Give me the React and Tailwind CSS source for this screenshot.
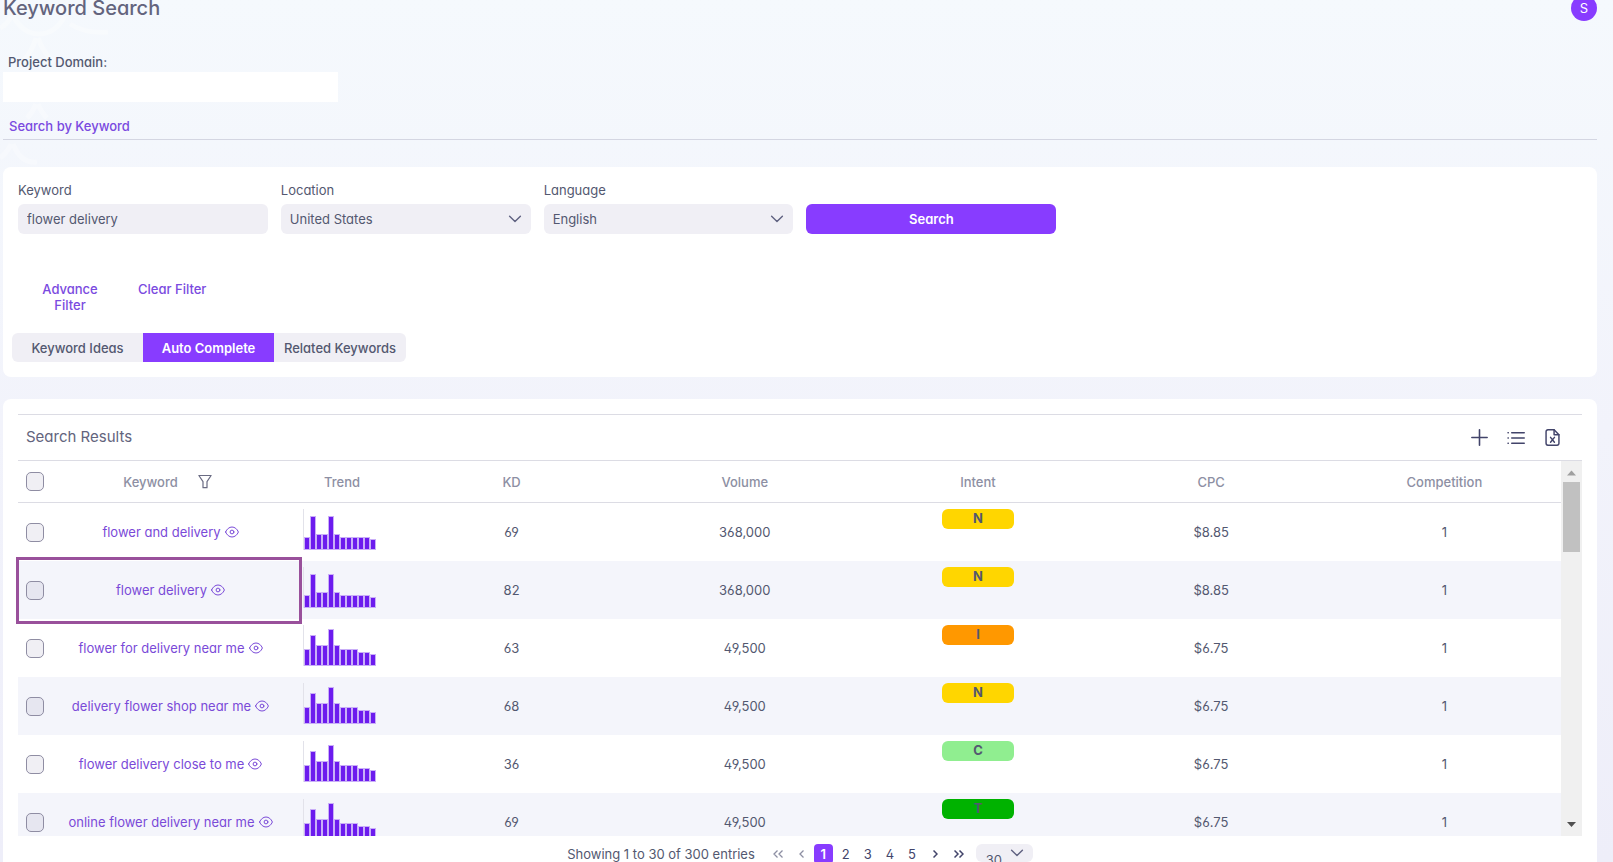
import React from "react";

const NEAR_ME = [17, 31, 21, 21, 37, 21, 17, 17, 17, 14, 14, 12];
const SEASONAL = [13, 34, 16, 16, 34, 16, 13, 13, 13, 13, 13, 11];

const INTENT_STYLES = {
  N: "bg-[#ffd600]",
  I: "bg-[#ff9800]",
  C: "bg-[#90ee90]",
  T: "bg-[#00b200]",
};

const ROWS = [
  { keyword: "flower and delivery", trend: SEASONAL, kd: 69, volume: "368,000", intent: "N", cpc: "$8.85", competition: 1 },
  { keyword: "flower delivery", trend: SEASONAL, kd: 82, volume: "368,000", intent: "N", cpc: "$8.85", competition: 1 },
  { keyword: "flower for delivery near me", trend: NEAR_ME, kd: 63, volume: "49,500", intent: "I", cpc: "$6.75", competition: 1 },
  { keyword: "delivery flower shop near me", trend: NEAR_ME, kd: 68, volume: "49,500", intent: "N", cpc: "$6.75", competition: 1 },
  { keyword: "flower delivery close to me", trend: NEAR_ME, kd: 36, volume: "49,500", intent: "C", cpc: "$6.75", competition: 1 },
  { keyword: "online flower delivery near me", trend: NEAR_ME, kd: 69, volume: "49,500", intent: "T", cpc: "$6.75", competition: 1 },
];

function Icon({ className, size = 14, stroke = 1, children }) {
  return (
    <svg className={className} width={size} height={size} viewBox="0 0 14 14" fill="none" stroke="currentColor" strokeWidth={stroke} strokeLinecap="round" strokeLinejoin="round" aria-hidden="true">
      {children}
    </svg>
  );
}

const Chevron = ({ className }) => (
  <Icon className={className} stroke={1.4}>
    <path d="M1.6 4.3 7 9.6l5.4-5.3" />
  </Icon>
);

const Eye = () => (
  <Icon>
    <path d="M.6 7C1.800 4 4.300 2 7 2S12.200 4 13.400 7C12.200 10 9.700 12 7 12S1.800 10 .6 7Z" />
    <circle cx="7" cy="7" r="1.900" />
  </Icon>
);

const Funnel = () => (
  <Icon stroke={1.2}>
    <path d="M.9.5h12.200L9 6.600v6.100H5V6.600Z" />
  </Icon>
);

const Plus = () => (
  <Icon size={17} stroke={1.3}>
    <path d="M7 .7v12.600M.7 7h12.600" />
  </Icon>
);

const ListIcon = () => (
  <Icon size={18} stroke={1.2}>
    <path d="M3.700 2.900h9.700M3.700 7h9.700M3.700 11.100h9.700M.8 2.900h.2M.8 7h.2M.8 11.100h.2" />
  </Icon>
);

const FileExcel = () => (
  <Icon size={17} stroke={1.2}>
    <path d="M8.300.7H3.200A1.500 1.500 0 0 0 1.700 2.200v9.600a1.500 1.500 0 0 0 1.500 1.500h7.600a1.500 1.500 0 0 0 1.500-1.500V4.700Z" />
    <path d="M8.300.7v4h4M5.400 6.900l3.200 4M8.600 6.900l-3.200 4" />
  </Icon>
);

function Trend({ values }) {
  return (
    <svg width="74" height="42" viewBox="0 0 74 42" role="img" aria-label="Search trend">
      <path d="M.5 0v41" stroke="#e2e2ea" />
      {values.map((v, i) => (
        <rect key={i} x={1.5 + i * 6} y={41.5 - v} width="5" height={v - 1} fill="#6c1bee" stroke="#c9aef8" />
      ))}
    </svg>
  );
}

function Check({ label }) {
  return (
    <input
      type="checkbox"
      aria-label={label}
      className="block h-[19px] w-[18px] appearance-none rounded-[5px] border border-[#8f8da3] bg-[#6b6591]/10 checked:bg-[#883cff]"
    />
  );
}

function SelectField({ id, label, value }) {
  return (
    <div className="flex flex-col gap-1.5">
      <label htmlFor={id}>{label}</label>
      <div className="grid">
        <select id={id} className="col-start-1 row-start-1 h-[30px] appearance-none rounded-md bg-[#f0eff5] px-[9px]">
          <option>{value}</option>
        </select>
        <Chevron className="pointer-events-none col-start-1 row-start-1 mr-[9px] self-center justify-self-end text-[#5f6180]" />
      </div>
    </div>
  );
}

function Backdrop() {
  return (
    <svg className="pointer-events-none absolute left-0 top-0" width="130" height="180" fill="none" stroke="#ffffff" strokeOpacity=".3" strokeWidth="5" aria-hidden="true">
      <path d="M0 28q8-4 11-12M13 16q10 18 26 18t26-18M70 24q16 10 38 8M36 38q-4 14-14 24M38 38q6 16 16 24M36 104q-3 8-9 14M38 104q3 8 9 14M0 158q8-6 11-14M13 144q8 20 24 18" />
    </svg>
  );
}

export default function App() {
  return (
    <div className="relative h-screen overflow-hidden bg-linear-to-b from-[#f5f9fd] via-[#f2f3fb] to-[#eeeef9] font-['Inter','Liberation_Sans',sans-serif] text-[13px] leading-4 text-[#535870] [font-feature-settings:'cv02','cv03','cv04','cv11']">
      <Backdrop />
      <div className="relative pl-[3px] pr-4">
        <header className="flex h-[21px] items-end justify-between">
          <h1 className="self-start text-xl font-medium leading-4 text-[#63647d]">Keyword Search</h1>
          <button className="size-[26px] shrink-0 rounded-full bg-[#883cff] text-white">S</button>
        </header>

        <div className="mt-[33px] flex flex-col gap-0.5">
          <label htmlFor="domain" className="pl-[5px] font-medium">Project Domain:</label>
          <input id="domain" className="h-[30px] w-[335px] bg-white px-2" />
        </div>

        <nav className="mt-[15px] border-b border-[#d4d6e2] pb-1 pl-1.5">
          <a href="#keyword" className="inline-block py-px font-medium text-[#7a4ae0]">Search by Keyword</a>
        </nav>

        <section className="mt-[27px] h-[210px] rounded-lg bg-white px-[15px] pt-[15px]">
          <form className="grid grid-cols-6 items-end gap-x-[13px]" onSubmit={(e) => e.preventDefault()}>
            <div className="flex flex-col gap-1.5">
              <label htmlFor="keyword">Keyword</label>
              <input id="keyword" defaultValue="flower delivery" className="h-[30px] w-full rounded-md bg-[#f0eff5] px-[9px]" />
            </div>
            <SelectField id="location" label="Location" value="United States" />
            <SelectField id="language" label="Language" value="English" />
            <button className="h-[30px] rounded-md bg-[#883cff] font-semibold text-white">Search</button>
          </form>
          <div className="mt-[47px] flex items-start gap-4 font-medium text-[#7a4ae0]">
            <button className="w-[104px] px-5">Advance Filter</button>
            <button className="whitespace-nowrap">Clear Filter</button>
          </div>
          <div className="-ml-1.5 mt-5 flex font-medium">
            <button className="h-[29px] w-[131px] rounded-l-md bg-[#f0eff5]">Keyword Ideas</button>
            <button className="h-[29px] w-[131px] bg-[#883cff] font-semibold text-white">Auto Complete</button>
            <button className="h-[29px] w-[132px] rounded-r-md bg-[#f0eff5]">Related Keywords</button>
          </div>
        </section>

        <section className="mt-[22px] rounded-lg bg-white px-[15px] pb-8 pt-[15px]">
          <div className="flex h-[46px] items-center justify-between border-t border-[#dcdce4] pl-2 pr-[21px]">
            <h2 className="pb-0.5 text-[15px] text-[#63647d]">Search Results</h2>
            <div className="flex items-center gap-[19px] text-[#42446a]">
              <button aria-label="Add"><Plus /></button>
              <button aria-label="List"><ListIcon /></button>
              <button aria-label="Export to Excel"><FileExcel /></button>
            </div>
          </div>

          <div className="relative">
            <div className="flex h-[376px] overflow-hidden border-t border-[#dcdce4]">
              <div className="min-w-0 flex-1 overflow-hidden">
                <table className="w-full table-fixed border-separate border-spacing-0 text-center">
                  <thead>
                    <tr className="h-[42px] text-[#8d8fa3] [&>th]:border-b [&>th]:border-[#dcdce4] [&>th]:p-0 [&>th]:font-medium">
                      <th className="w-[34px]"><div className="pl-2"><Check label="Select all" /></div></th>
                      <th className="w-[237px]">
                        <div className="flex items-center justify-center gap-5 pr-1.5">
                          Keyword
                          <button aria-label="Filter keywords" className="text-[#6a6b83]"><Funnel /></button>
                        </div>
                      </th>
                      <th className="w-[106px]">Trend</th>
                      <th>KD</th>
                      <th>Volume</th>
                      <th>Intent</th>
                      <th>CPC</th>
                      <th>Competition</th>
                    </tr>
                  </thead>
                  <tbody>
                    {ROWS.map((row) => (
                      <tr key={row.keyword} className="h-[58px] even:bg-[#f4f5fb] [&>td]:p-0">
                        <td><div className="pl-2"><Check label={"Select " + row.keyword} /></div></td>
                        <td>
                          <a href="#details" className="flex items-center justify-center gap-1 text-[#7a4ad8]">
                            {row.keyword}
                            <Eye />
                          </a>
                        </td>
                        <td><div className="flex justify-center pb-1 pr-1"><Trend values={row.trend} /></div></td>
                        <td>{row.kd}</td>
                        <td>{row.volume}</td>
                        <td className="align-top">
                          <div className={"mx-auto mt-1.5 h-5 w-[72px] rounded-md font-bold leading-[19px] " + INTENT_STYLES[row.intent]}>{row.intent}</div>
                        </td>
                        <td>{row.cpc}</td>
                        <td>{row.competition}</td>
                      </tr>
                    ))}
                  </tbody>
                </table>
              </div>
              <div className="flex w-[21px] shrink-0 flex-col items-center bg-[#f0f0f0]">
                <svg width="21" height="21" aria-hidden="true"><path d="M6 14.500h9l-4.500-5Z" fill="#a0a0a0" /></svg>
                <div className="h-[70px] w-[17px] bg-[#c1c1c1]" />
                <svg className="mt-auto" width="21" height="21" aria-hidden="true"><path d="M6 7h9l-4.500 5Z" fill="#505050" /></svg>
              </div>
            </div>
            <div className="pointer-events-none absolute -left-0.5 top-[97px] h-[67px] w-[286px] border-[3px] border-[#99509b]" />
          </div>

          <div className="mt-2 flex items-start justify-center">
            <span className="mr-[18px] mt-0.5">Showing 1 to 30 of 300 entries</span>
            <div className="flex items-center text-[#42446a]">
              <button aria-label="First page" className="flex h-5 w-[10px] items-center text-[#8d8fa3]">
                <svg width="10" height="8" fill="none" stroke="currentColor" strokeWidth="1.3"><path d="M4.500.5 1 4l3.500 3.500M9.500.5 6 4l3.500 3.500" /></svg>
              </button>
              <button aria-label="Previous page" className="ml-4 flex h-5 w-[5px] items-center text-[#8d8fa3]">
                <svg width="5" height="8" fill="none" stroke="currentColor" strokeWidth="1.3"><path d="M4.500.5 1 4l3.500 3.500" /></svg>
              </button>
              <button className="ml-2.5 h-5 w-[19px] rounded bg-[#883cff] font-semibold text-white">1</button>
              <div className="ml-0.5 flex">
                {[2, 3, 4, 5].map((n) => (
                  <button key={n} className="h-5 w-[22px]">{n}</button>
                ))}
              </div>
              <button aria-label="Next page" className="ml-2.5 flex h-5 w-[5px] items-center">
                <svg width="5" height="8" fill="none" stroke="currentColor" strokeWidth="1.5"><path d="M.5.5 4 4 .5 7.500" /></svg>
              </button>
              <button aria-label="Last page" className="ml-4 flex h-5 w-[10px] items-center">
                <svg width="10" height="8" fill="none" stroke="currentColor" strokeWidth="1.5"><path d="M.5.5 4 4 .5 7.500M5.500.5 9 4 5.500 7.500" /></svg>
              </button>
            </div>
            <div className="ml-3 grid">
              <select aria-label="Rows per page" className="col-start-1 row-start-1 h-[18px] w-[57px] appearance-none rounded-md bg-[#f0eff5] pl-2.5 pt-2 leading-4">
                <option>30</option>
              </select>
              <Chevron className="pointer-events-none col-start-1 row-start-1 mr-[9px] mt-0.5 justify-self-end text-[#5f6180]" />
            </div>
          </div>
        </section>
      </div>
    </div>
  );
}
